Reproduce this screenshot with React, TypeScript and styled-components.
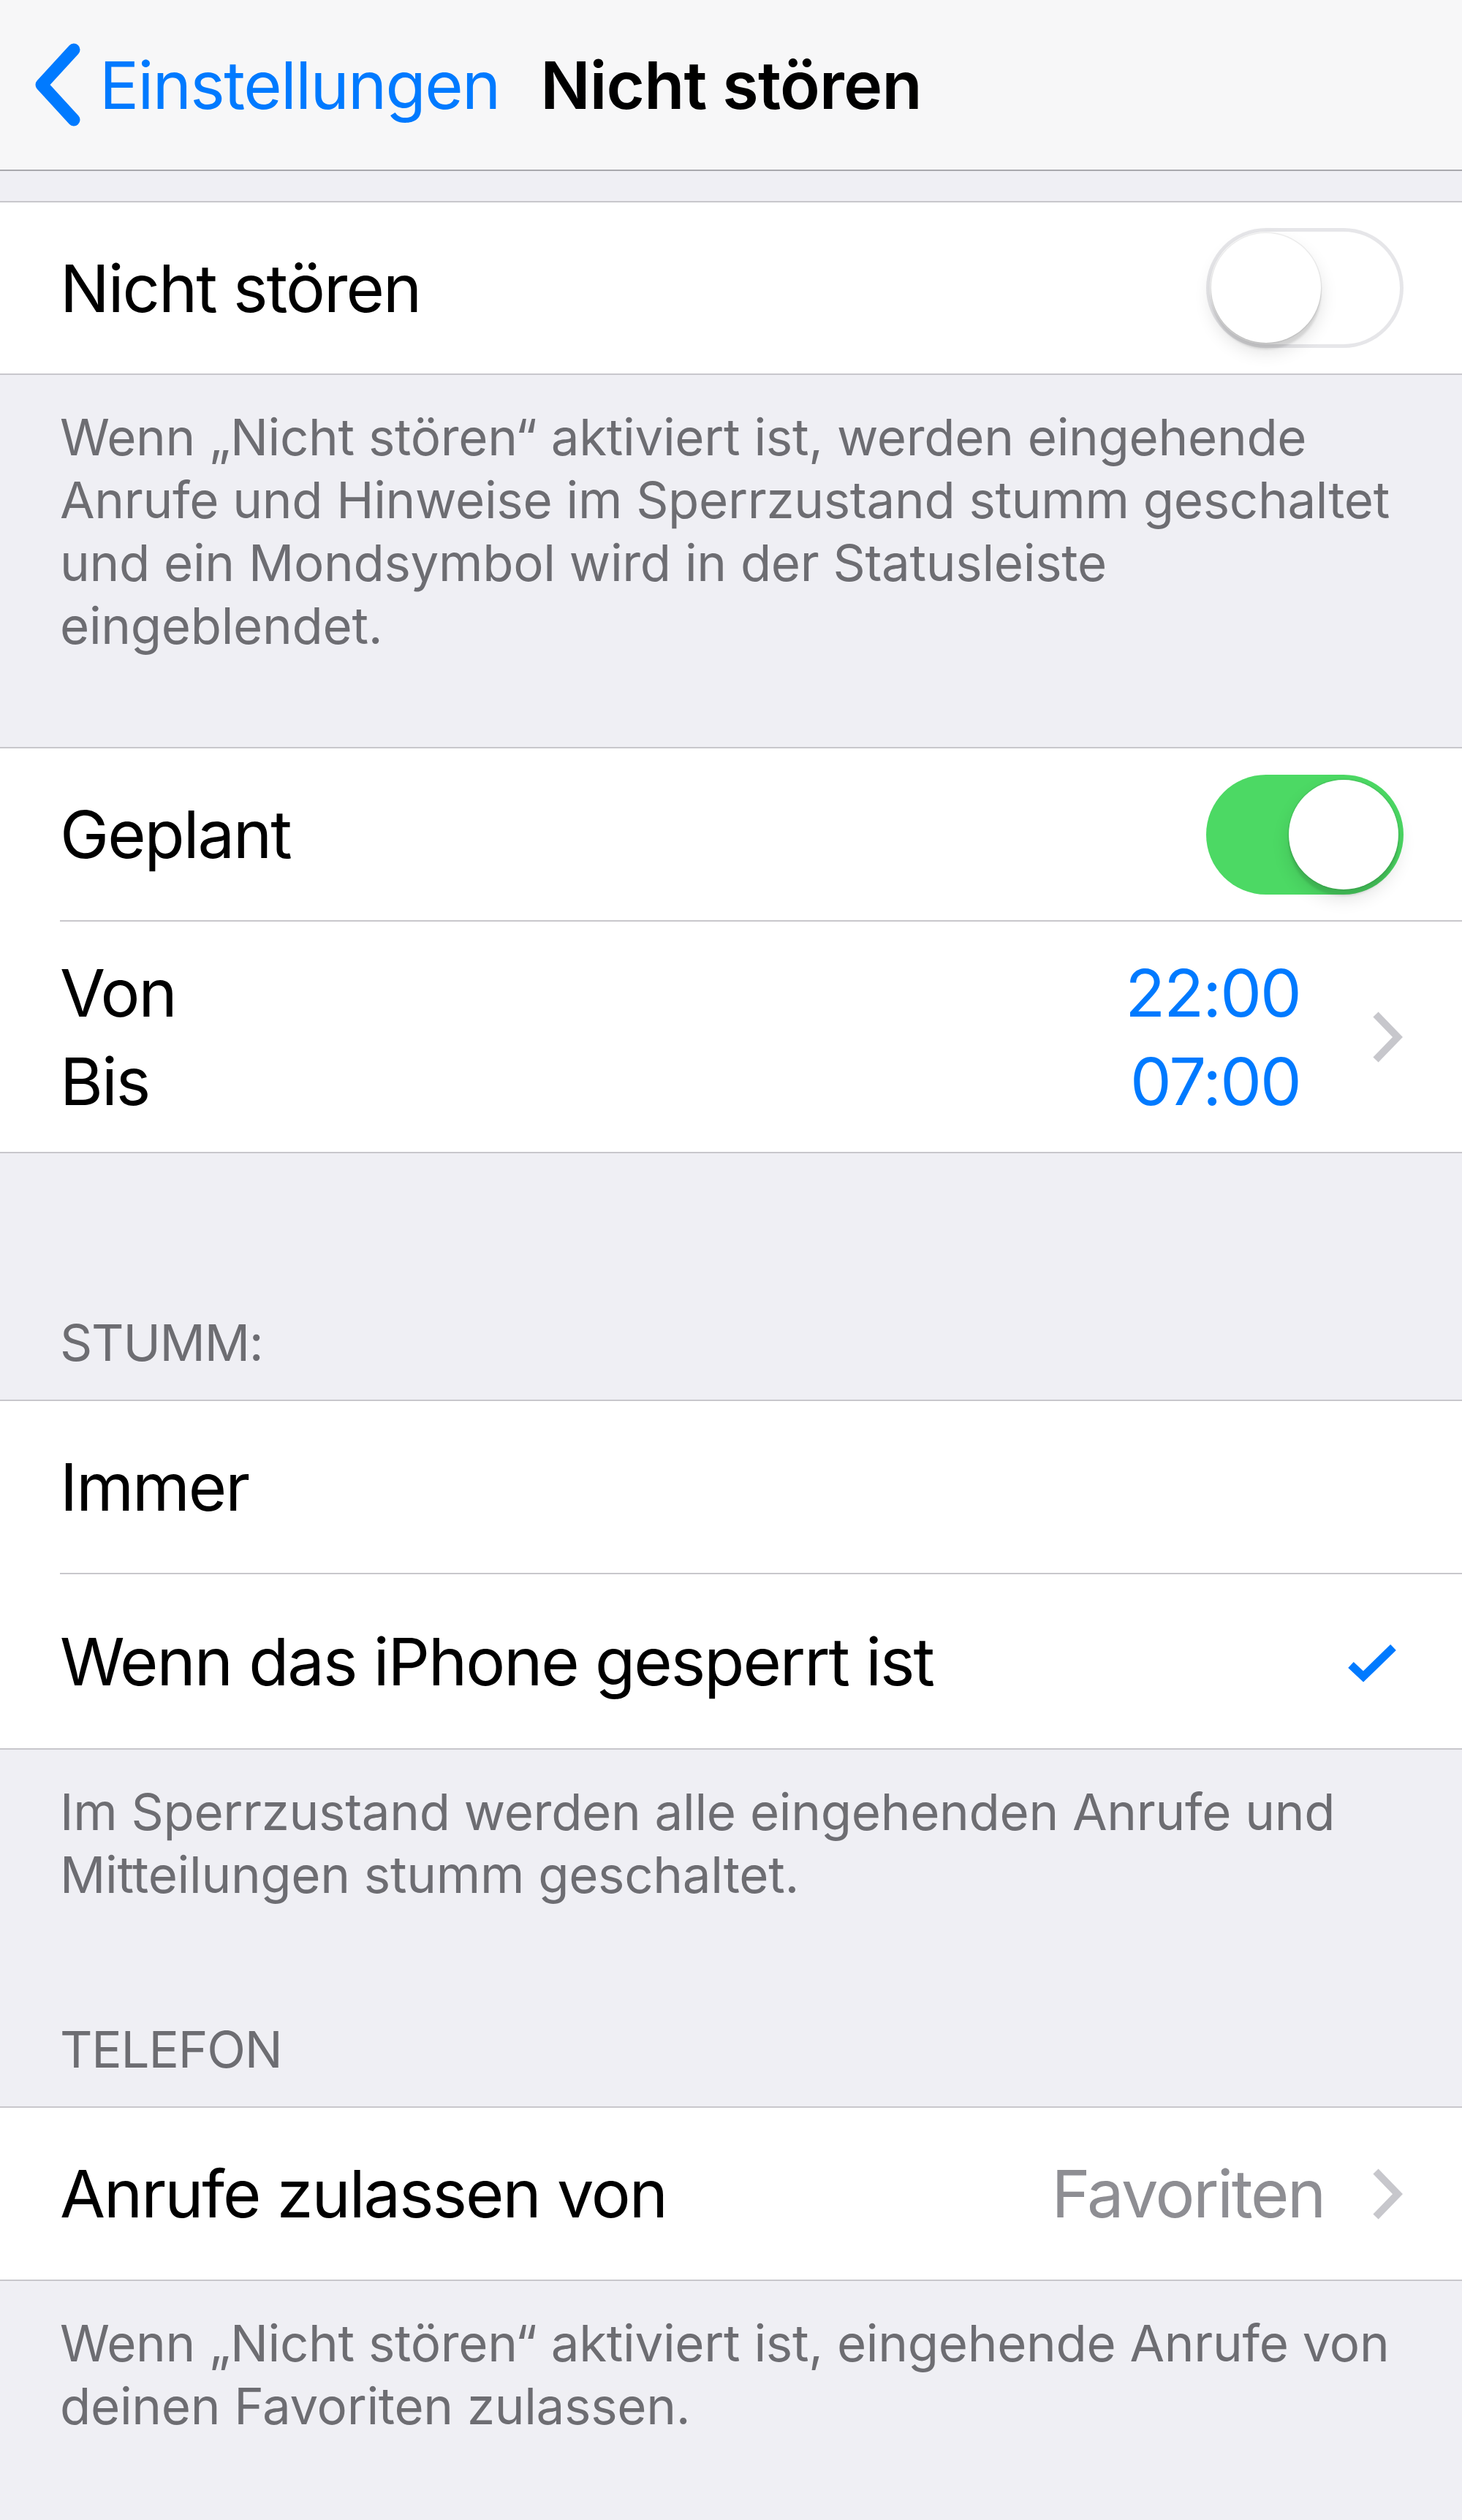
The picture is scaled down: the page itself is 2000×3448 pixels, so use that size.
import React from "react";
import styled, { createGlobalStyle } from "styled-components";

const GlobalStyle = createGlobalStyle`
  html, body {
    margin: 0;
    padding: 0;
    background: #efeff4;
  }
  body {
    font-family: Inter, "Liberation Sans", sans-serif;
    -webkit-font-smoothing: antialiased;
  }
`;

const Page = styled.div`
  width: 2000px;
  min-height: 3448px;
  background: #efeff4;
`;

const NavBar = styled.header`
  height: 232px;
  background: #f7f7f8;
  border-bottom: 2px solid #a9a9ad;
  display: grid;
  grid-template-columns: 1fr auto 1fr;
  align-items: center;
`;

const BackButton = styled.div`
  display: flex;
  align-items: center;
  gap: 25px;
  padding-left: 47px;
  color: #007aff;
  font-size: 90px;
  letter-spacing: -1.6px;
`;

const Title = styled.h1`
  margin: 0;
  font-size: 90px;
  font-weight: 600;
  letter-spacing: -0.8px;
  color: #000;
`;

const Group = styled.section<{ $top?: number }>`
  margin-top: ${(p) => p.$top ?? 0}px;
  background: #fff;
  border-top: 2px solid #c8c7cc;
  border-bottom: 2px solid #c8c7cc;
`;

const Row = styled.div<{ $h: number }>`
  height: ${(p) => p.$h}px;
  display: flex;
  padding-left: 82px;
`;

const RowBody = styled.div<{ $divider?: boolean }>`
  flex: 1;
  display: flex;
  align-items: center;
  justify-content: space-between;
  padding-right: 80px;
  border-bottom: ${(p) => (p.$divider ? "2px solid #c8c7cc" : "none")};
`;

const Label = styled.span`
  font-size: 90px;
  color: #000;
  letter-spacing: -2px;
`;

const Stack = styled.div<{ $align?: string }>`
  display: flex;
  flex-direction: column;
  align-items: ${(p) => p.$align ?? "flex-start"};
  line-height: 121px;
`;

const TimeValue = styled.span`
  font-size: 90px;
  color: #007aff;
  letter-spacing: -1.9px;
`;

const Accessory = styled.div<{ $gap: number }>`
  display: flex;
  align-items: center;
  gap: ${(p) => p.$gap}px;
`;

const Detail = styled.span`
  font-size: 90px;
  color: #8e8e93;
  letter-spacing: -2.3px;
`;

const Footer = styled.p<{ $bottom?: number }>`
  margin: 0;
  padding: 42px 0 ${(p) => p.$bottom ?? 0}px 82px;
  font-size: 69px;
  line-height: 86px;
  color: #6d6d72;
  letter-spacing: -0.3px;
  white-space: nowrap;
`;

const SectionHeader = styled.h2<{ $top: number }>`
  margin: 0;
  padding: ${(p) => p.$top}px 0 35px 82px;
  font-size: 69px;
  line-height: 86px;
  font-weight: 400;
  color: #6d6d72;
  letter-spacing: -1.2px;
`;

const Track = styled.div<{ $on?: boolean }>`
  width: 270px;
  height: 164px;
  border-radius: 82px;
  box-sizing: border-box;
  display: flex;
  align-items: center;
  justify-content: ${(p) => (p.$on ? "flex-end" : "flex-start")};
  padding: 0 7px;
  background: ${(p) => (p.$on ? "#4cd964" : "#fff")};
  box-shadow: ${(p) => (p.$on ? "none" : "inset 0 0 0 5px #e6e6e9")};
`;

const Knob = styled.div`
  width: 150px;
  height: 150px;
  border-radius: 50%;
  background: #fff;
  box-shadow: 0 0 0 1.5px rgba(0, 0, 0, 0.06), 0 9px 3px rgba(0, 0, 0, 0.1),
    0 12px 24px rgba(0, 0, 0, 0.12);
`;

function Switch({ on }: { on?: boolean }) {
  return (
    <Track $on={on}>
      <Knob />
    </Track>
  );
}

function Chevron() {
  return (
    <svg width="44" height="72" viewBox="0 0 44 72">
      <polyline
        points="6,5 36,36 6,67"
        fill="none"
        stroke="#c7c7cc"
        strokeWidth="10"
      />
    </svg>
  );
}

function BackChevron() {
  return (
    <svg width="64" height="114" viewBox="0 0 64 114">
      <polyline
        points="54,9 10,57 54,105"
        fill="none"
        stroke="#007aff"
        strokeWidth="17"
        strokeLinecap="round"
        strokeLinejoin="round"
      />
    </svg>
  );
}

function Check() {
  return (
    <svg width="72" height="60" viewBox="0 0 72 60" style={{ marginRight: 7 }}>
      <polyline
        points="7,35 24,51 65,11"
        fill="none"
        stroke="#007aff"
        strokeWidth="11"
      />
    </svg>
  );
}

export default function App() {
  return (
    <Page>
      <GlobalStyle />
      <NavBar>
        <BackButton>
          <BackChevron />
          Einstellungen
        </BackButton>
        <Title>Nicht stören</Title>
        <div />
      </NavBar>

      <Group $top={41}>
        <Row $h={234}>
          <RowBody>
            <Label>Nicht stören</Label>
            <Switch />
          </RowBody>
        </Row>
      </Group>
      <Footer $bottom={123}>
        Wenn „Nicht stören“ aktiviert ist, werden eingehende
        <br />
        Anrufe und Hinweise im Sperrzustand stumm geschaltet
        <br />
        und ein Mondsymbol wird in der Statusleiste
        <br />
        eingeblendet.
      </Footer>

      <Group>
        <Row $h={237}>
          <RowBody $divider>
            <Label>Geplant</Label>
            <Switch on />
          </RowBody>
        </Row>
        <Row $h={315}>
          <RowBody>
            <Stack>
              <Label>Von</Label>
              <Label>Bis</Label>
            </Stack>
            <Accessory $gap={97}>
              <Stack $align="flex-end">
                <TimeValue>22:00</TimeValue>
                <TimeValue>07:00</TimeValue>
              </Stack>
              <Chevron />
            </Accessory>
          </RowBody>
        </Row>
      </Group>

      <SectionHeader $top={216}>STUMM:</SectionHeader>
      <Group>
        <Row $h={237}>
          <RowBody $divider>
            <Label>Immer</Label>
          </RowBody>
        </Row>
        <Row $h={238}>
          <RowBody>
            <Label>Wenn das iPhone gesperrt ist</Label>
            <Check />
          </RowBody>
        </Row>
      </Group>
      <Footer>
        Im Sperrzustand werden alle eingehenden Anrufe und
        <br />
        Mitteilungen stumm geschaltet.
      </Footer>

      <SectionHeader $top={153}>TELEFON</SectionHeader>
      <Group>
        <Row $h={235}>
          <RowBody>
            <Label>Anrufe zulassen von</Label>
            <Accessory $gap={64}>
              <Detail>Favoriten</Detail>
              <Chevron />
            </Accessory>
          </RowBody>
        </Row>
      </Group>
      <Footer>
        Wenn „Nicht stören“ aktiviert ist, eingehende Anrufe von
        <br />
        deinen Favoriten zulassen.
      </Footer>
    </Page>
  );
}
